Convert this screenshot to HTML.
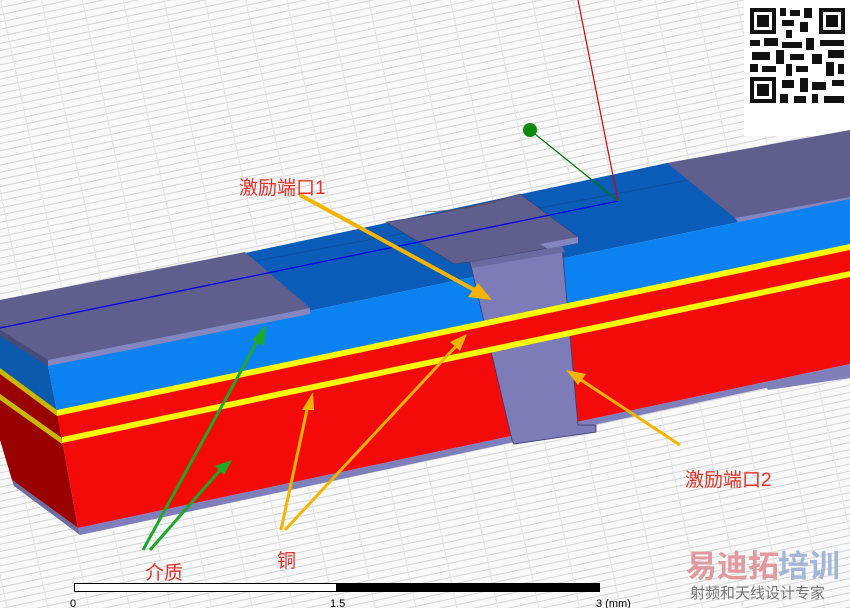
<!DOCTYPE html>
<html><head><meta charset="utf-8"><style>
html,body{margin:0;padding:0;width:850px;height:608px;overflow:hidden;background:#fff}
svg{display:block}
.t{font-family:"Liberation Sans","Noto Sans CJK SC",sans-serif}
</style></head><body>
<svg width="850" height="608" viewBox="0 0 850 608" xmlns="http://www.w3.org/2000/svg">
<defs>
<pattern id="g" width="40" height="7" patternUnits="userSpaceOnUse" patternTransform="rotate(-12)">
<rect width="40" height="7" fill="#f9f9f9"/>
<line x1="0" y1="0.5" x2="40" y2="0.5" stroke="#d6d6d6" stroke-width="1"/>
<line x1="0.5" y1="0" x2="0.5" y2="7" stroke="#e4e4e4" stroke-width="1"/>
</pattern>
</defs>
<rect width="850" height="608" fill="url(#g)"/>
<rect x="744" y="0" width="106" height="136" fill="#fff"/>
<g fill="#111">
<rect x="750" y="8" width="26" height="26"/><rect x="754" y="12" width="18" height="18" fill="#fff"/><rect x="757" y="15" width="12" height="12"/>
<rect x="819" y="8" width="26" height="26"/><rect x="823" y="12" width="18" height="18" fill="#fff"/><rect x="826" y="15" width="12" height="12"/>
<rect x="750" y="77" width="26" height="26"/><rect x="754" y="81" width="18" height="18" fill="#fff"/><rect x="757" y="84" width="12" height="12"/>
<rect x="780" y="8" width="6" height="8"/><rect x="790" y="10" width="10" height="6"/><rect x="804" y="8" width="8" height="10"/>
<rect x="782" y="20" width="12" height="6"/><rect x="800" y="22" width="8" height="10"/><rect x="786" y="30" width="6" height="8"/>
<rect x="750" y="40" width="10" height="6"/><rect x="764" y="38" width="14" height="8"/><rect x="782" y="42" width="20" height="6"/><rect x="806" y="38" width="8" height="12"/><rect x="820" y="40" width="24" height="6"/>
<rect x="752" y="52" width="18" height="8"/><rect x="776" y="50" width="8" height="14"/><rect x="790" y="54" width="14" height="6"/><rect x="812" y="54" width="10" height="10"/><rect x="828" y="50" width="16" height="8"/>
<rect x="750" y="64" width="8" height="8"/><rect x="762" y="66" width="14" height="6"/><rect x="786" y="64" width="6" height="12"/><rect x="796" y="66" width="12" height="6"/><rect x="826" y="62" width="8" height="14"/><rect x="838" y="64" width="6" height="10"/>
<rect x="782" y="80" width="12" height="8"/><rect x="800" y="78" width="8" height="14"/><rect x="812" y="82" width="14" height="8"/><rect x="832" y="80" width="12" height="6"/>
<rect x="780" y="94" width="8" height="9"/><rect x="794" y="96" width="12" height="7"/><rect x="812" y="94" width="6" height="9"/><rect x="824" y="96" width="20" height="7"/>
</g>
<polygon points="0,300 250,252 667,163 850,140 850,199 48,365 0,335" fill="#0a5cb8"/>
<line x1="250" y1="262" x2="850" y2="150" stroke="#0b4f9c" stroke-width="1"/>
<polygon points="667,163 850,130 850,197 735,218" fill="#5f5e8c"/>
<polygon points="735,218 850,197 850,203 738,222" fill="#8585c0"/>
<polygon points="0,335 48,365 57,412 0,372" fill="#0b5aae"/>
<polygon points="48,365 850,199 850,246 57,412" fill="#0a82f2"/>
<polygon points="0,372 57,412 78,528 12,480 0,440" fill="#990000"/>
<polygon points="0,368 57,410 57,416 0,374" fill="#c8b800"/>
<polygon points="0,394 62,438 62,444 0,400" fill="#c8b800"/>
<polygon points="57,412 850,246 850,364 78,528" fill="#f50a0a"/>
<polygon points="78,528 850,364 850,370 80,535" fill="#7f80bb"/>
<polygon points="12,480 78,528 80,535 14,486" fill="#6c6ca0"/>
<polygon points="765,385 850,364 850,378 768,390" fill="#7f80bb"/>
<polygon points="470,262 562,246 578,425 596,425 596,432 514,444 512,440" fill="#7d7bb8" stroke="#3a3a70" stroke-width="0.8"/>
<polygon points="57,414 850,248 850,272 62,440" fill="#f50a0a"/>
<polygon points="57,410 850,244 850,250 57,416" fill="#ffff00"/>
<polygon points="62,437 850,271 850,277 62,443" fill="#ffff00"/>
<polygon points="0,300 245,252 310,308 48,360 0,330" fill="#5f5e8c"/>
<polygon points="48,360 310,308 310,314 48,366" fill="#8585c0"/>
<polygon points="0,330 48,360 48,366 0,336" fill="#4a4a78"/>
<path d="M386,222 L430,215 Q480,205 520,194 L578,237 L578,243 L560,246 L470,262 L454,264 Z" fill="#5f5e8c" stroke="#3a3a70" stroke-width="0.6"/>
<polygon points="540,244 578,237 578,243 548,249" fill="#8585c0"/>
<polygon points="470,262 562,246 565,252 472,268" fill="#6a69a0"/>
<path d="M425,212 Q470,210 505,199" stroke="#555" stroke-width="0.7" fill="none"/>
<line x1="0" y1="328" x2="618" y2="201" stroke="#0000e6" stroke-width="1.3"/>
<line x1="578" y1="0" x2="618" y2="201" stroke="#e00000" stroke-width="1.2"/>
<line x1="530" y1="130" x2="618" y2="201" stroke="#007a00" stroke-width="1.2"/>
<circle cx="530" cy="130" r="7" fill="#0a8a0a"/>
<g stroke="#f5b400" fill="#f5b400">
<line x1="300" y1="195" x2="480" y2="293" stroke-width="4"/>
<polygon points="492,300 468,297 478,283" stroke="none"/>
<line x1="281" y1="530" x2="308" y2="405" stroke-width="3"/>
<polygon points="313,392 302,410 314,410" stroke="none"/>
<line x1="285" y1="530" x2="458" y2="344" stroke-width="3"/>
<polygon points="467,334 450,342 460,351" stroke="none"/>
<line x1="680" y1="445" x2="578" y2="378" stroke-width="3"/>
<polygon points="566,370 578,385 586,374" stroke="none"/>
</g>
<g stroke="#1ea82a" fill="#1ea82a">
<line x1="143" y1="550" x2="258" y2="340" stroke-width="3"/>
<polygon points="266,325 252,340 264,346" stroke="none"/>
<line x1="150" y1="550" x2="222" y2="468" stroke-width="3"/>
<polygon points="232,460 215,466 224,475" stroke="none"/>
</g>
<g class="t" fill="#e8312a" font-size="19">
<text x="239" y="194">激励端口1</text>
<text x="685" y="486">激励端口2</text>
<text x="145" y="579">介质</text>
<text x="277" y="567">铜</text>
</g>
<rect x="74.5" y="583.5" width="262" height="8" fill="#fff" stroke="#000"/>
<rect x="336" y="583" width="264" height="9" fill="#000"/>
<g class="t" font-size="11" fill="#000">
<text x="70" y="607">0</text>
<text x="330" y="607">1.5</text>
<text x="596" y="607">3 (mm)</text>
</g>
<g class="t" font-weight="bold" font-size="31">
<text x="686" y="577" fill="#e09096" opacity="0.9">易迪拓</text>
<text x="778" y="577" fill="#9ab0d8" opacity="0.9">培训</text>
</g>
<text class="t" x="690" y="598" font-size="15" fill="#777">射频和天线设计专家</text>
</svg>
</body></html>
